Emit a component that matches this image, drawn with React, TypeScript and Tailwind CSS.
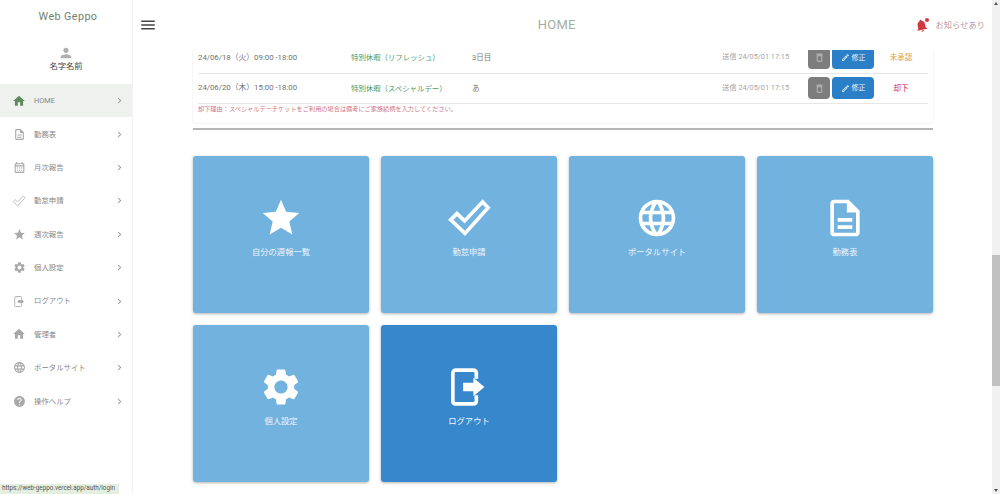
import React from "react";
import {
  MdHome, MdOutlineDescription, MdOutlineCalendarMonth, MdStar, MdSettings, MdLanguage, MdHelp,
  MdChevronRight, MdMenu, MdPerson, MdOutlineEdit, MdOutlineDelete, MdNotifications,
} from "react-icons/md";

const CheckOutline = ({ size = 44, sw = 2 }: { size?: number; sw?: number }) => (
  <svg width={size} height={size} viewBox="0 0 24 24" fill="none" stroke="currentColor" strokeWidth={sw} strokeLinejoin="miter">
    <path d="M2 13 L5.4 9.6 L9.6 13.6 L19.4 3.2 L22.4 6.4 L9.8 20.4 Z" />
  </svg>
);

const LogoutIcon = ({ size = 44, sw = 2 }: { size?: number; sw?: number }) => (
  <svg width={size} height={size} viewBox="0 0 24 24" fill="none">
    <path d="M16 7.5 V4.5 C16 3.4 15.3 2.8 14.3 2.8 H4.8 C3.8 2.8 3.2 3.4 3.2 4.5 V19.5 C3.2 20.6 3.8 21.2 4.8 21.2 H14.3 C15.3 21.2 16 20.6 16 19.5 V16.5" stroke="currentColor" strokeWidth={sw} />
    <path d="M8.8 9.7 H14.4 V7 L20.4 12 L14.4 17 V14.3 H8.8 Z" fill="currentColor" />
  </svg>
);

const nav: { label: string; icon: React.ReactNode; active?: boolean }[] = [
  { label: "HOME", icon: <MdHome size={14} />, active: true },
  { label: "勤務表", icon: <MdOutlineDescription size={13} /> },
  { label: "月次報告", icon: <MdOutlineCalendarMonth size={13} /> },
  { label: "勤怠申請", icon: <CheckOutline size={14} sw={1.2} /> },
  { label: "週次報告", icon: <MdStar size={13} /> },
  { label: "個人設定", icon: <MdSettings size={13} /> },
  { label: "ログアウト", icon: <LogoutIcon size={13} sw={1.6} /> },
  { label: "管理者", icon: <MdHome size={14} /> },
  { label: "ポータルサイト", icon: <MdLanguage size={13} /> },
  { label: "操作ヘルプ", icon: <MdHelp size={13} /> },
];

const tiles: { label: string; icon: React.ReactNode; dark?: boolean }[] = [
  { label: "自分の週報一覧", icon: <MdStar size={44} /> },
  { label: "勤怠申請", icon: <CheckOutline size={44} sw={2} /> },
  { label: "ポータルサイト", icon: <MdLanguage size={44} /> },
  { label: "勤務表", icon: <MdOutlineDescription size={44} /> },
  { label: "個人設定", icon: <MdSettings size={44} /> },
  { label: "ログアウト", icon: <LogoutIcon size={44} />, dark: true },
];

const rows = [
  { date: "24/06/18（火）09:00 -18:00", type: "特別休暇（リフレッシュ）", note: "3日目", status: "未承認", color: "text-[#dd9a3c]" },
  { date: "24/06/20（木）15:00 -18:00", type: "特別休暇（スペシャルデー）", note: "あ", status: "却下", color: "text-[#c8264a]" },
];

export default function App() {
  return (
    <div
      className="relative flex h-[494px] w-[1000px] overflow-hidden bg-white text-[#555]"
      style={{ fontFamily: 'Roboto, "Noto Sans CJK JP", sans-serif' }}
    >
      <aside className="flex w-[133px] shrink-0 flex-col border-r border-[#f3f3f3] bg-white">
        <div className="flex h-[34px] items-center justify-center pl-[4px] text-[10.8px] tracking-[0.4px] text-[#6f8270]">
          Web Geppo
        </div>
        <div className="flex h-[50px] flex-col items-center justify-start pt-[11px] text-[#444]">
          <MdPerson size={16} className="text-[#b0b0b0]" />
          <span className="text-[8.3px] leading-[11px]">名字名前</span>
        </div>
        <nav className="flex flex-col">
          {nav.map((n) => (
            <div
              key={n.label}
              className={`flex h-[33.4px] items-center pl-[12px] pr-[7px] ${n.active ? "bg-[#eef1ee]" : ""}`}
            >
              <span className={`flex w-[14px] justify-center ${n.active ? "text-[#5f8a5f]" : "text-[#a8a8a8]"}`}>{n.icon}</span>
              <span className="ml-[8px] flex-1 text-[7.4px] text-[#888]">{n.label}</span>
              <MdChevronRight size={11} className="text-[#999]" />
            </div>
          ))}
        </nav>
      </aside>

      <main className="flex min-w-0 flex-1 flex-col">
        <header className="relative z-10 flex h-[50px] shrink-0 items-center bg-white pl-[6px] pr-[7px]">
          <MdMenu size={18} className="text-[#444]" />
          <div className="flex-1 pl-[42px] text-center text-[13px] tracking-[0.3px] text-[#a3aea3]">HOME</div>
          <span className="relative flex">
            <MdNotifications size={15} className="-rotate-12 text-[#d0393f]" />
            <span className="absolute right-0 top-0 h-[4px] w-[4px] rounded-full bg-[#d0393f]" />
          </span>
          <span className="ml-[6px] text-[8.2px] tracking-[0.1px] text-[#b8969b]">お知らせあり</span>
        </header>

        <div className="mt-[-7px] flex-1 pl-[60px] pr-[59px]">
          <section className="h-[80px] rounded-[3px] px-[5px] shadow-[0_0_2px_rgba(0,0,0,0.14)]">
            {rows.map((r) => (
              <div
                key={r.date}
                className="grid h-[30.5px] grid-cols-[153px_121px_250px_86px_66px_1fr] items-center border-b border-[#e6e6e6]"
              >
                <span className="whitespace-nowrap text-[7.8px] text-[#707070]">{r.date}</span>
                <span className="whitespace-nowrap text-[7.4px] text-[#4b9a68]">{r.type}</span>
                <span className="text-[7.5px] text-[#777]">{r.note}</span>
                <span className="whitespace-nowrap text-[7.3px] text-[#a5a5a5]">送信 24/05/01 17:15</span>
                <span className="flex gap-[2px]">
                  <span className="flex h-[22px] w-[22px] items-center justify-center rounded-[4px] bg-[#7d7d7d] text-[#bdbdbd]">
                    <MdOutlineDelete size={11} />
                  </span>
                  <span className="flex h-[22px] w-[42px] items-center justify-center gap-[2px] rounded-[4px] bg-[#2b7fc6] text-[7px] text-[#e6f0f8]">
                    <MdOutlineEdit size={9} />
                    修正
                  </span>
                </span>
                <span className={`text-center text-[7.5px] ${r.color}`}>{r.status}</span>
              </div>
            ))}
            <p className="pt-[1px] text-[6.2px] leading-[9px] text-[#cf7585]">
              却下理由：スペシャルデーチケットをご利用の場合は備考にご家族続柄を入力してください。
            </p>
          </section>

          <hr className="mt-[5px] border-t-2 border-[#b5b5b5]" />

          <div className="mt-[26px] grid grid-cols-4 gap-x-[12px] gap-y-[12px]">
            {tiles.map((t) => (
              <div
                key={t.label}
                className={`flex h-[157px] flex-col items-center rounded-[3px] pt-[40px] text-white shadow-[0_1px_3px_rgba(0,0,0,0.3)] ${
                  t.dark ? "bg-[#3787cc]" : "bg-[#72b2df]"
                }`}
              >
                {t.icon}
                <span className="mt-[6px] text-[8.3px] leading-[12px] text-[#eef5fa]">{t.label}</span>
              </div>
            ))}
          </div>
        </div>
      </main>

      <div className="relative w-[8px] shrink-0 bg-[#f1f1f1]">
        <div className="absolute left-0 top-[255px] h-[131px] w-[8px] bg-[#c1c1c1]" />
        <div className="absolute left-[2px] top-[2px] h-0 w-0 border-x-[2px] border-b-[3px] border-x-transparent border-b-[#555]" />
        <div className="absolute bottom-[2px] left-[2px] h-0 w-0 border-x-[2px] border-t-[3px] border-x-transparent border-t-[#555]" />
      </div>

      <div className="absolute bottom-0 left-0 flex h-[10px] w-[119px] items-center whitespace-nowrap bg-[#e4efdf] pl-[2px] text-[6.3px] text-[#555]">
        https://web-geppo.vercel.app/auth/login
      </div>
    </div>
  );
}
